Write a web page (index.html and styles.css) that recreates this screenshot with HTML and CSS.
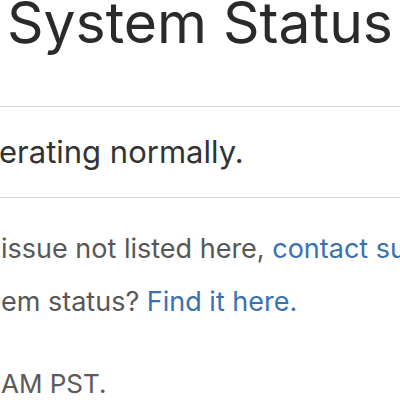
FILE: index.html
```html
<!DOCTYPE html>
<html lang="en">
<head>
<meta charset="utf-8">
<title>System Status</title>
<link rel="stylesheet" href="styles.css">
</head>
<body>
<main class="status">
  <h1 class="status-title">System Status</h1>
  <section class="status-banner">
    <p class="status-summary">erating normally.</p>
  </section>
  <p class="status-note note-first">issue not listed here, <a class="status-link" href="#">contact support.</a></p>
  <p class="status-note">em status? <a class="status-link" href="#">Find it here.</a></p>
  <p class="status-updated">AM PST.</p>
</main>
</body>
</html>
```
FILE: styles.css
```css
html, body {
  margin: 0;
  padding: 0;
  background: #ffffff;
  overflow: hidden;
}

.status {
  font-family: Inter, "Noto Sans", "Liberation Sans", sans-serif;
  width: 400px;
  overflow: hidden;
  white-space: nowrap;
}

.status-title {
  margin: 0 0 60px 7px;
  font-size: 57px;
  line-height: 46px;
  font-weight: 400;
  color: #2a2a2a;
  letter-spacing: 0;
}

.status-banner {
  border-top: 1px solid #d4d4d4;
  border-bottom: 1px solid #d4d4d4;
  padding: 25px 0;
}

.status-summary {
  margin: 0 0 0 -1px;
  font-size: 31px;
  line-height: 40px;
  color: #333333;
}

.status-note {
  margin: 17px 0 0 1px;
  font-size: 27px;
  line-height: 36px;
  color: #575757;
}

.note-first {
  margin-top: 33px;
}

.status-link {
  color: #3a71b1;
  text-decoration: none;
}

.status-updated {
  margin: 46px 0 0 1px;
  font-size: 26px;
  line-height: 36px;
  color: #5a5a5a;
}
```
